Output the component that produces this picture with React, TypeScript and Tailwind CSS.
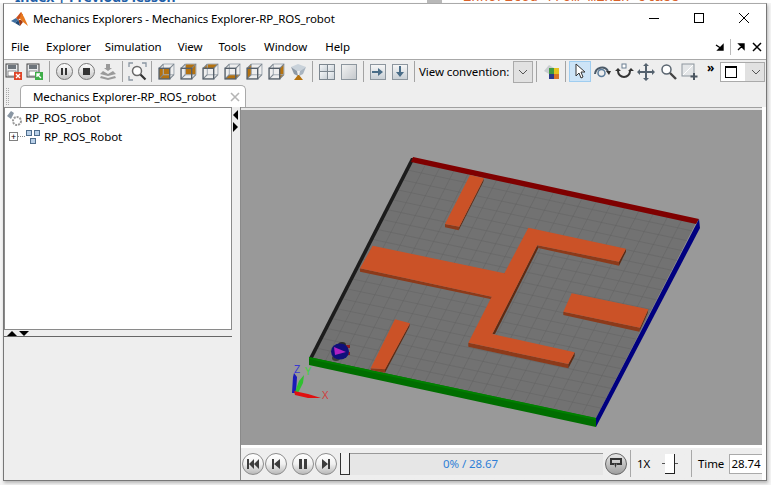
import React from "react";

// faces of the little view cube icons
const cubeFaces: Record<string, string> = {
  front: "1,5 11,5 11,15 1,15",
  back: "5,1 15,1 15,11 5,11",
  top: "1,5 5,1 15,1 11,5",
  bottom: "1,15 5,11 15,11 11,15",
  left: "1,5 5,1 5,11 1,15",
  right: "11,5 15,1 15,11 11,15",
};

function Slot({ children, className = "w-[22px]" }: { children: React.ReactNode; className?: string }) {
  return <div className={`flex h-[21px] shrink-0 items-center justify-center ${className}`}>{children}</div>;
}

function Sep() {
  return <div className="mx-[3px] h-[21px] w-px shrink-0 bg-[#a3a3a3]" />;
}

function Cube({ face }: { face: string }) {
  return (
    <svg width="17" height="17" viewBox="0 0 16 16">
      <polygon points={cubeFaces[face]} fill="#b5720f" />
      <path d="M5 1h10v10M5 1v10h10" fill="none" stroke="#a5adb5" strokeWidth="1" />
      <path d="M1 5L5 1M11 5l4-4M11 15l4-4M1 15l4-4" fill="none" stroke="#7d8790" strokeWidth="1" />
      <rect x="1" y="5" width="10" height="10" fill="none" stroke="#56606a" strokeWidth="1.3" />
    </svg>
  );
}

function ToolBtn({ children }: { children: React.ReactNode }) {
  return (
    <div className="flex h-[17px] w-[17px] items-center justify-center rounded-full border border-[#777] bg-linear-to-b from-white to-[#c4c4c4]">
      {children}
    </div>
  );
}

function SaveIcon({ accent, arrow }: { accent: string; arrow: string }) {
  return (
    <svg width="18" height="18" viewBox="0 0 18 18">
      <rect x="1" y="1" width="12" height="13" fill="#e8eaec" stroke="#444" />
      <rect x="3" y="2" width="8" height="4" fill="#6d747b" />
      <rect x="3" y="8" width="8" height="5" fill="#fff" stroke="#666" strokeWidth="0.7" />
      <rect x="9" y="9" width="8" height="8" fill={accent} />
      <path d={arrow} stroke="#fff" strokeWidth="1.3" fill="none" />
    </svg>
  );
}

function PlayBtn({ children }: { children: React.ReactNode }) {
  return (
    <div className="flex h-[22px] w-[22px] shrink-0 items-center justify-center rounded-full border border-[#8c8c8c] bg-linear-to-b from-white via-[#f0f0f0] to-[#b9b9b9]">
      <svg width="14" height="12" viewBox="0 0 14 12" fill="#3d3d3d">
        {children}
      </svg>
    </div>
  );
}

function MatlabLogo() {
  return (
    <svg width="17" height="17" viewBox="0 0 17 17">
      <polygon points="0,10 5,7 7.5,9 4,12" fill="#3f6f9f" />
      <polygon points="5,7 10,1 12,4 7.5,9" fill="#c9501c" />
      <polygon points="10,1 13,6 17,15 12,11 9,8" fill="#e8791e" />
      <polygon points="7.5,9 10,9 12,11 9,15" fill="#a63a12" />
      <polygon points="4,12 7.5,9 9,15" fill="#1f4a78" />
    </svg>
  );
}

// grid drawn over the floor, corners taken from the screenshot
const TL = [412, 160];
const TR = [697, 221];
const BR = [596, 418];
const BL = [311, 358];
const lerp = (a: number[], b: number[], t: number) => [a[0] + (b[0] - a[0]) * t, a[1] + (b[1] - a[1]) * t];
const gridSteps = Array.from({ length: 19 }, (_, i) => (i + 1) / 20);

function Scene() {
  return (
    <svg className="block h-[335px] w-[521px]" viewBox="241 110 521 335">
      <polygon points="412,160 697,221 596,418 311,358" fill="#727272" />
      {gridSteps.map((t) => {
        const a = lerp(TL, TR, t);
        const b = lerp(BL, BR, t);
        const c = lerp(TL, BL, t);
        const d = lerp(TR, BR, t);
        return (
          <g key={t} stroke="#636363" strokeWidth="0.5">
            <line x1={a[0]} y1={a[1]} x2={b[0]} y2={b[1]} />
            <line x1={c[0]} y1={c[1]} x2={d[0]} y2={d[1]} />
          </g>
        );
      })}

      {/* outer walls */}
      <polygon points="411,158 415,158 313,358 309,358" fill="#1c1c1c" />
      <polygon points="413,157 699,219 696,224 411,162" fill="#7f0000" />
      <polygon points="699,219 700,228 596,427 596,418" fill="#000080" />
      <polygon points="309,357 596,418 596,427 309,365" fill="#006e00" />
      <polygon points="309,357 596,418 596,420 309,359" fill="#008000" />

      {/* maze blocks, in zoomed coordinates */}
      <g transform="translate(350 150) scale(0.33333)">
        <g fill="#8c3a1a">
          <polygon points="285,222 328,230 326,241 285,232" />
          <polygon points="30,355 425,440 425,448 30,365" />
          <polygon points="355,578 655,642 655,655 355,590" />
          <polygon points="562,286 807,335 807,347 565,294" />
          <polygon points="640,485 870,533 868,545 640,495" />
          <polygon points="62,655 105,658 105,668 62,660" />
        </g>
        <g fill="#5f2a12">
          <polygon points="328,230 402,85 400,95 326,241" />
          <polygon points="655,642 674,607 674,618 655,655" />
          <polygon points="807,335 828,296 828,305 807,347" />
          <polygon points="870,533 895,478 893,490 868,545" />
          <polygon points="105,658 180,520 178,530 105,668" />
          <polygon points="562,286 427,552 435,552 565,294" />
          <polygon points="425,440 463,370 468,370 425,448" />
        </g>
        <g fill="#cb5227">
          <polygon points="360,75 402,85 328,230 285,222" />
          <polygon points="535,233 828,296 807,335 562,286 427,552 674,607 655,642 355,578 425,440 30,355 68,287 463,370" />
          <polygon points="665,430 895,478 870,533 640,485" />
          <polygon points="135,508 180,520 105,658 62,655" />
        </g>
      </g>

      {/* robot */}
      <ellipse cx="342" cy="345" rx="4" ry="3" fill="#2c2c2c" />
      <ellipse cx="336" cy="358" rx="4" ry="3" fill="#3a3a3a" />
      <rect x="346" y="345" width="4" height="3" fill="#8c2020" />
      <rect x="346" y="352" width="4" height="3" fill="#8c2020" />
      <ellipse cx="340" cy="351.5" rx="9" ry="8" fill="#10107a" />
      <polygon points="334,347 346,352 335,355" fill="#b020c0" />

      {/* axes triad */}
      <polygon points="292,393 293,377 294,373 297,377 296,393" fill="#1a1ab8" />
      <polygon points="295,392 299,381 304,375 303,383 298,393" fill="#30c030" />
      <polygon points="294,391 308,394 321,398 308,398 295,395" fill="#e01010" />
      <text x="294" y="373" fontSize="11" fill="#3a3ad0">Z</text>
      <text x="305" y="375" fontSize="11" fill="#40d040">Y</text>
      <text x="322" y="399" fontSize="11" fill="#d04040">X</text>
    </svg>
  );
}

export default function App() {
  return (
    <div className="h-[485px] w-[771px] overflow-hidden bg-[#f4f4f4] font-['Noto_Sans',sans-serif] text-[11.5px] tracking-[-0.08px] text-black">
      {/* what shows of the page behind the window */}
      <div className="flex h-[3px] overflow-hidden bg-white">
        <div className="ml-[15px] -mt-[11px] w-[412px] shrink-0 text-[14px] leading-[16px] font-bold text-[#1f5fa8]">
          Index | Previous lesson
        </div>
        <div className="h-[3px] w-[15px] shrink-0 bg-[#b8b8b8]" />
        <div className="ml-[21px] -mt-[11px] font-['Liberation_Mono',monospace] text-[14px] leading-[16px] text-[#d9622b]">
          inherited from mixin class
        </div>
      </div>

      <div className="ml-[3px] flex h-[478px] w-[764px] flex-col border border-[#777] border-t-[#aaa] bg-[#eeeeee] shadow-[1px_2px_3px_rgba(0,0,0,0.25)]">
        {/* title bar */}
        <div className="flex h-[30px] shrink-0 items-center bg-white">
          <div className="ml-[7px]">
            <MatlabLogo />
          </div>
          <span className="ml-[5px] whitespace-nowrap">Mechanics Explorers - Mechanics Explorer-RP_ROS_robot</span>
          <div className="ml-auto flex items-center gap-[35px] pr-[17px] pb-[2px]">
            <div className="h-px w-[10px] bg-black" />
            <div className="h-[10px] w-[10px] border border-black" />
            <svg width="10" height="10" viewBox="0 0 10 10" stroke="#000">
              <path d="M0 0l10 10M10 0L0 10" />
            </svg>
          </div>
        </div>

        {/* menu bar */}
        <div className="flex h-[26px] shrink-0 items-center border-b border-[#a8a8a8] bg-white pl-[7px]">
          <span>File</span>
          <span className="ml-[17px]">Explorer</span>
          <span className="ml-[14px]">Simulation</span>
          <span className="ml-[16px]">View</span>
          <span className="ml-[16px]">Tools</span>
          <span className="ml-[18px]">Window</span>
          <span className="ml-[18px]">Help</span>
          <div className="ml-auto flex items-center pr-[4px]">
            <svg width="10" height="10" viewBox="0 0 10 10">
              <path d="M1 3l6 4M8 3v5H3z" stroke="#000" strokeWidth="1.4" />
            </svg>
            <div className="mx-[5px] h-[16px] w-px bg-[#bbb]" />
            <svg width="10" height="10" viewBox="0 0 10 10">
              <path d="M2 8l5-5M3 2h5v5z" stroke="#000" strokeWidth="1.4" />
            </svg>
            <svg className="ml-[6px]" width="10" height="10" viewBox="0 0 10 10" stroke="#000" strokeWidth="1.5">
              <path d="M1 1l8 8M9 1l-8 8" />
            </svg>
          </div>
        </div>

        {/* toolbar */}
        <div className="flex h-[25px] shrink-0 items-start pt-px">
          <Slot className="w-[20px]">
            <SaveIcon accent="#e0472a" arrow="M11 11l4 4M15 11l-4 4" />
          </Slot>
          <Slot>
            <SaveIcon accent="#3fae49" arrow="M15 15l-4-4M11 14v-3h3" />
          </Slot>
          <Sep />
          <Slot>
            <ToolBtn>
              <div className="flex gap-[2px]">
                <div className="h-[7px] w-[2px] bg-[#333]" />
                <div className="h-[7px] w-[2px] bg-[#333]" />
              </div>
            </ToolBtn>
          </Slot>
          <Slot>
            <ToolBtn>
              <div className="h-[7px] w-[7px] bg-[#333]" />
            </ToolBtn>
          </Slot>
          <Slot>
            <svg width="18" height="17" viewBox="0 0 18 17" fill="#9a9a9a">
              <path d="M7 1h4v4l2 0-4 3-4-3 2 0z" />
              <path d="M4 8l5 3 5-3 3 3-8 2-8-2z" />
              <path d="M2 13l7 2 7-2 1 2-8 2-8-2z" />
            </svg>
          </Slot>
          <Sep />
          <Slot>
            <svg width="19" height="19" viewBox="0 0 19 19" fill="none">
              <path d="M1 5V1h4M14 1h4v4M1 14v4h4" stroke="#8a96a2" strokeWidth="1.3" />
              <circle cx="9" cy="9" r="4.5" fill="#fff" stroke="#6a6a6a" strokeWidth="1.5" />
              <path d="M12.5 12.5l5 5" stroke="#333" strokeWidth="2.2" />
            </svg>
          </Slot>
          <Sep />
          {["front", "back", "top", "bottom", "left", "right"].map((f) => (
            <Slot key={f}>
              <Cube face={f} />
            </Slot>
          ))}
          <Slot>
            <svg width="17" height="18" viewBox="0 0 17 18">
              <polygon points="1,4 8,1 16,4 10,8 7,8" fill="#c9d2da" />
              <polygon points="1,4 7,8 8,13 4,11" fill="#8d99a6" />
              <polygon points="16,4 10,8 9,13 13,11" fill="#a8b4c0" />
              <polygon points="8,12 9,12 13,17 4,17" fill="#b5720f" />
            </svg>
          </Slot>
          <Sep />
          <Slot>
            <div className="grid h-[16px] w-[16px] grid-cols-2 gap-px border border-[#7d8790] bg-[#7d8790]">
              <div className="bg-linear-to-br from-[#f4f6f8] to-[#cbd2d8]" />
              <div className="bg-linear-to-br from-[#f4f6f8] to-[#cbd2d8]" />
              <div className="bg-linear-to-br from-[#f4f6f8] to-[#cbd2d8]" />
              <div className="bg-linear-to-br from-[#f4f6f8] to-[#cbd2d8]" />
            </div>
          </Slot>
          <Slot>
            <div className="h-[16px] w-[16px] border border-[#8d969e] bg-linear-to-br from-[#f2f2f2] to-[#c5c9cd]" />
          </Slot>
          <Sep />
          <Slot>
            <div className="flex h-[16px] w-[16px] items-center justify-center border border-[#8d969e] bg-linear-to-b from-[#f6f6f6] to-[#c9d0d6]">
              <svg width="12" height="12" viewBox="0 0 12 12" fill="#4a6d88">
                <path d="M0 5h6V2l5 4-5 4V7H0z" />
              </svg>
            </div>
          </Slot>
          <Slot>
            <div className="flex h-[16px] w-[16px] items-center justify-center border border-[#8d969e] bg-linear-to-b from-[#f6f6f6] to-[#c9d0d6]">
              <svg width="12" height="12" viewBox="0 0 12 12" fill="#4a6d88">
                <path d="M5 0h2v6h3l-4 5-4-5h3z" />
              </svg>
            </div>
          </Slot>
          <Sep />
          <span className="ml-[1px] flex h-[21px] w-[90px] shrink-0 items-center whitespace-nowrap">View convention:</span>
          <div className="ml-[4px] flex h-[22px] w-[20px] shrink-0 items-center justify-center border border-[#aaa] bg-[#e1e1e1]">
            <svg width="10" height="6" viewBox="0 0 10 6" fill="none" stroke="#555">
              <path d="M1 1l4 4 4-4" />
            </svg>
          </div>
          <Sep />
          <Slot>
            <svg width="17" height="17" viewBox="0 0 17 17">
              <polygon points="1,8 6,2 11,5 6,11" fill="#c8ccd0" />
              <rect x="6" y="5" width="5" height="6" fill="#3f9a44" />
              <rect x="11" y="5" width="5" height="6" fill="#e6c21e" />
              <rect x="6" y="11" width="5" height="5" fill="#2b3a8c" />
              <rect x="11" y="11" width="5" height="5" fill="#d9742a" />
            </svg>
          </Slot>
          <Sep />
          <Slot className="w-[22px] border border-[#9fcdf0] bg-[#cde4f7]">
            <svg width="14" height="17" viewBox="0 0 14 17">
              <path d="M3 1v12l3-3 2 5 2-1-2-5h4z" fill="#fff" stroke="#333" />
            </svg>
          </Slot>
          <Slot>
            <svg width="19" height="17" viewBox="0 0 19 17" fill="none">
              <path d="M2 11a7 7 0 0 1 13-3" stroke="#4b5a68" strokeWidth="2" />
              <path d="M13 8h5l-2 4z" fill="#333" />
              <circle cx="8.5" cy="10" r="3.5" stroke="#5c7d9c" strokeWidth="1.5" />
            </svg>
          </Slot>
          <Slot>
            <svg width="19" height="17" viewBox="0 0 19 17" fill="none">
              <path d="M3 8a6 6 0 0 0 12 0" stroke="#333" strokeWidth="2" />
              <path d="M0 8l3-3 3 3zM13 8l3-3 3 3z" fill="#333" />
              <rect x="7" y="1" width="4" height="4" fill="#fff" stroke="#6b7f92" />
            </svg>
          </Slot>
          <Slot>
            <svg width="18" height="18" viewBox="0 0 18 18" fill="#55626e">
              <path d="M8 3h2v5h5V6l3 3-3 3v-2h-5v5h2l-3 3-3-3h2v-5H3v2L0 9l3-3v2h5V3H6l3-3 3 3z" />
            </svg>
          </Slot>
          <Slot>
            <svg width="17" height="17" viewBox="0 0 17 17" fill="none">
              <circle cx="6.5" cy="6.5" r="4.5" fill="#fff" stroke="#5a6570" strokeWidth="1.5" />
              <path d="M10 10l6 6" stroke="#444" strokeWidth="2.4" />
            </svg>
          </Slot>
          <Slot>
            <svg width="18" height="18" viewBox="0 0 18 18" fill="none">
              <rect x="1" y="1" width="12" height="12" fill="#e4e6e8" stroke="#8d969e" />
              <path d="M2 12l10-10" stroke="#fff" />
              <path d="M13 10v7M9.5 13.5h7" stroke="#4a5560" strokeWidth="2" />
            </svg>
          </Slot>
          <div className="mt-[1px] w-[19px] shrink-0 pl-[6px] text-[12px] leading-none font-bold">»</div>
          <div className="mt-[1px] flex h-[20px] w-[45px] shrink-0 items-center border border-[#aaa] bg-[#e1e1e1]">
            <div className="flex h-[18px] w-[24px] items-center bg-white pl-[4px]">
              <div className="h-[12px] w-[12px] border-[1.5px] border-t-[2px] border-black" />
            </div>
            <svg className="ml-[6px]" width="10" height="6" viewBox="0 0 10 6" fill="none" stroke="#555">
              <path d="M1 1l4 4 4-4" />
            </svg>
          </div>
        </div>

        {/* document tab */}
        <div className="flex h-[22px] shrink-0 items-end">
          <div className="mb-[2px] ml-[2px] h-[17px] w-[3px] border-x border-dotted border-[#aaa]" />
          <div className="ml-[11px] flex h-[22px] w-[226px] items-center rounded-t-[5px] border border-b-0 border-[#a9a9a9] bg-white pl-[12px]">
            <span className="whitespace-nowrap">Mechanics Explorer-RP_ROS_robot</span>
            <svg className="ml-auto mr-[5px]" width="10" height="10" viewBox="0 0 10 10" stroke="#b5b5b5" strokeWidth="1.6">
              <path d="M1 1l8 8M9 1l-8 8" />
            </svg>
          </div>
        </div>

        <div className="flex min-h-0 flex-1">
          {/* left pane */}
          <div className="flex w-[228px] shrink-0 flex-col">
            <div className="h-[223px] shrink-0 border border-[#8a8a8a] bg-white">
              <div className="flex h-[20px] items-center pl-[1px]">
                <svg width="17" height="17" viewBox="0 0 17 17">
                  <polygon points="1,6 5,1 8,3 5,9" fill="#8a97a4" />
                  <circle cx="11" cy="11" r="4" fill="none" stroke="#9a9a9a" strokeWidth="2" strokeDasharray="2 1" />
                </svg>
                <span className="ml-[2px]">RP_ROS_robot</span>
              </div>
              <div className="flex h-[17px] items-center pl-[4px]">
                <div className="flex h-[9px] w-[9px] items-center justify-center border border-[#808080] text-[9px] leading-none">
                  +
                </div>
                <div className="w-[7px] border-t border-dotted border-[#888]" />
                <svg width="16" height="16" viewBox="0 0 16 16" fill="#b9d0e8" stroke="#4f6d8c">
                  <rect x="1.5" y="1.5" width="5" height="5" />
                  <rect x="9.5" y="1.5" width="5" height="5" />
                  <rect x="5.5" y="9.5" width="5" height="5" />
                </svg>
                <span className="ml-[3px]">RP_ROS_Robot</span>
              </div>
            </div>
            <div className="flex h-[6px] shrink-0 items-center gap-[2px] pl-[3px]">
              <div className="h-0 w-0 border-x-[5px] border-b-[5px] border-x-transparent border-b-black" />
              <div className="h-0 w-0 border-x-[5px] border-t-[5px] border-x-transparent border-t-black" />
            </div>
            <div className="flex-1 border-t border-[#666]" />
          </div>

          {/* splitter */}
          <div className="flex w-[9px] shrink-0 flex-col gap-[2px] border-r border-[#8a8a8a] pt-[3px] pl-[1px]">
            <div className="h-0 w-0 border-y-[5px] border-r-[5px] border-y-transparent border-r-black" />
            <div className="h-0 w-0 border-y-[5px] border-l-[5px] border-y-transparent border-l-black" />
          </div>

          {/* 3D view and playback bar */}
          <div className="flex min-w-0 flex-1 flex-col bg-white">
            <div className="h-[3px] shrink-0 border-t border-[#a0a0a0] bg-[#e8e8e8]" />
            <div className="h-[335px] shrink-0 bg-[#999999]">
              <Scene />
            </div>
            <div className="flex flex-1 items-center gap-[1px] bg-linear-to-b from-white from-10% to-[#eeeeee] to-10% pt-[2px] pl-[1px]">
              <PlayBtn>
                <path d="M1 1h2v10H1zM8 1v10L3 6zM13 1v10L8 6z" />
              </PlayBtn>
              <PlayBtn>
                <path d="M3 1h2v10H3zM11 1v10L5 6z" />
              </PlayBtn>
              <div className="w-[3px] shrink-0" />
              <PlayBtn>
                <path d="M3 1h3v10H3zM8 1h3v10H8z" />
              </PlayBtn>
              <PlayBtn>
                <path d="M3 1l6 5-6 5zM9 1h2v10H9z" />
              </PlayBtn>
              <div className="ml-[2px] flex h-[22px] w-[263px] shrink-0 items-center border-t border-[#999] bg-[#e6e6e6]">
                <div className="h-[22px] w-[10px] shrink-0 border-r border-b border-l border-[#333] bg-[#f2f2f2]" />
                <span className="flex-1 pr-[12px] text-center text-[#2f7fd6]">0% / 28.67</span>
              </div>
              <div className="ml-[1px] flex h-[22px] w-[22px] shrink-0 items-center justify-center rounded-full border border-[#666] bg-linear-to-b from-[#e8e8e8] to-[#9e9e9e]">
                <svg width="12" height="11" viewBox="0 0 12 11" fill="#333">
                  <path d="M0 0h12v7H7v-2h3V2H2v3h2v2H0zM4 5h3l-1.500 5z" />
                </svg>
              </div>
              <div className="ml-[2px] h-[27px] w-px shrink-0 bg-[#a8a8a8]" />
              <span className="ml-[5px] w-[14px] shrink-0">1X</span>
              <div className="ml-[10px] flex w-[16px] shrink-0 items-center justify-center">
                <div className="h-px w-[3px] bg-[#555]" />
                <div className="h-[20px] w-[10px] border-r border-b border-[#222] bg-white" />
                <div className="h-px w-[3px] bg-[#555]" />
              </div>
              <div className="ml-[12px] h-[27px] w-px shrink-0 bg-[#a8a8a8]" />
              <span className="ml-[5px] w-[25px] shrink-0">Time</span>
              <div className="ml-[5px] flex h-[20px] w-[34px] shrink-0 items-center justify-center border border-[#aaa] bg-white">
                28.74
              </div>
            </div>
          </div>
          <div className="w-[4px] shrink-0 bg-white" />
        </div>
      </div>
    </div>
  );
}
